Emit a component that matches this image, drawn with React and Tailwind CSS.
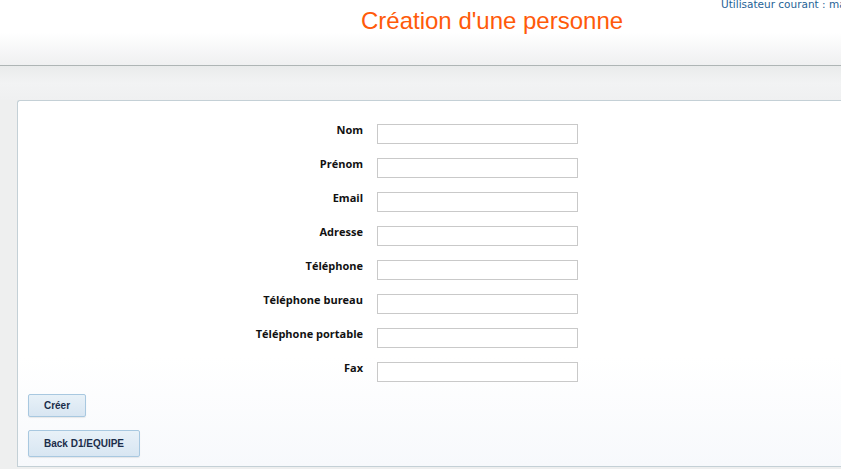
const FIELDS = [
  "Nom",
  "Prénom",
  "Email",
  "Adresse",
  "Téléphone",
  "Téléphone bureau",
  "Téléphone portable",
  "Fax",
];

function Field({ label }) {
  return (
    <div className="flex items-start">
      <label
        className="mt-[-2px] w-[345px] text-right text-[11px] font-bold leading-[15px] text-[#111]"
        style={{ fontFamily: '"Open Sans", "DejaVu Sans", sans-serif' }}
      >
        {label}
      </label>
      <input
        type="text"
        className="ml-[14px] h-[20px] w-[201px] border border-[#c9c9c9] bg-white outline-none"
      />
    </div>
  );
}

function Button({ children, className }) {
  return (
    <button
      type="button"
      className={`rounded-[2px] border border-[#a8c8e0] bg-gradient-to-b from-[#e8f1f8] to-[#d8e6f2] text-[10px] font-bold text-[#1b2d4a] shadow-[0_1px_1px_rgba(0,0,0,0.08)] ${className}`}
      style={{ fontFamily: '"Liberation Sans", Arial, sans-serif' }}
    >
      {children}
    </button>
  );
}

export default function App() {
  return (
    <div
      className="h-[469px] w-[841px] overflow-hidden bg-[#eeefef]"
      style={{ fontFamily: '"DejaVu Sans", "Open Sans", sans-serif' }}
    >
      <header className="relative h-[66px] border-b border-[#aeb5b5] bg-gradient-to-b from-white via-white to-[#eff0f1]">
        <h1
          className="pl-[361px] pt-[6px] text-[24px] leading-[30px] text-[#ff5a0a]"
          style={{ fontFamily: '"Liberation Sans", Arial, sans-serif' }}
        >
          Création d'une personne
        </h1>
        <span className="absolute left-[721px] top-[-2px] whitespace-nowrap text-[10.5px] leading-[12px] text-[#1f6396]">
          Utilisateur courant : ma
        </span>
      </header>

      <div className="h-[34px] bg-gradient-to-b from-[#e9ebeb] via-[#f2f3f4] to-[#eff0f1]" />

      <main className="ml-[17px] h-[367px] rounded-tl-[3px] border border-r-0 border-[#c4d0d6] bg-gradient-to-b from-white from-70% to-[#f7f9fc]">
        <div className="flex flex-col gap-[14px] pt-[23px]">
          {FIELDS.map((f) => (
            <Field key={f} label={f} />
          ))}
        </div>
        <div className="mt-[12px] flex flex-col items-start gap-[13px] pl-[10px]">
          <Button className="h-[23px] w-[58px]">Créer</Button>
          <Button className="h-[27px] w-[112px]">Back D1/EQUIPE</Button>
        </div>
      </main>
    </div>
  );
}
